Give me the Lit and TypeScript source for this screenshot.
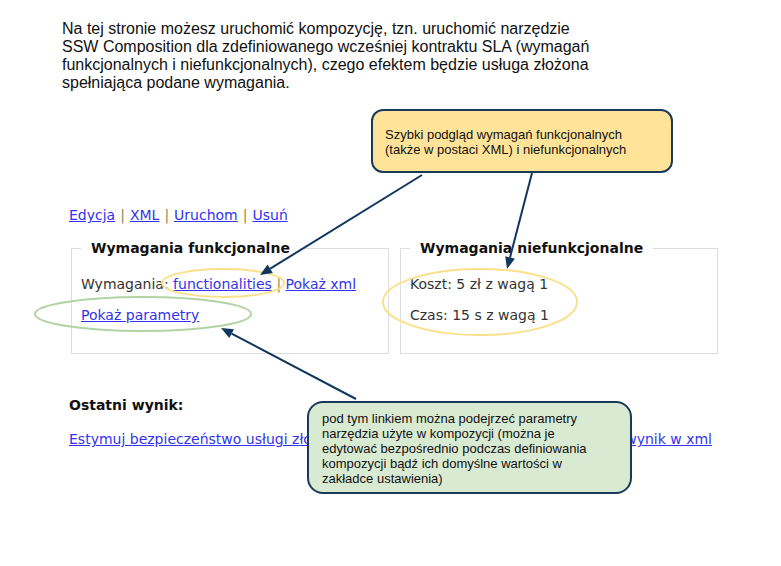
import { LitElement, html, css, svg } from "lit";
import { customElement } from "lit/decorators.js";

interface Arrow {
  from: [number, number];
  to: [number, number];
}

const ARROWS: Arrow[] = [
  { from: [422, 175], to: [260, 275] },
  { from: [532, 173], to: [507, 269] },
  { from: [356, 399], to: [221, 328] },
];

@customElement("app-root")
export class AppRoot extends LitElement {
  static styles = css`
    :host {
      display: block;
      background: #fff;
      color: #333;
      font: 14px/18px "DejaVu Sans", Verdana, sans-serif;
    }
    .page {
      position: relative;
      min-height: 100vh;
      box-sizing: border-box;
      padding: 20px 63px 48px 62px;
    }
    .intro {
      margin: 0 0 114px;
      color: #111;
      font: 16px/18px "Liberation Sans", Arial, sans-serif;
    }
    .panel {
      padding: 0 0 0 7px;
    }
    nav {
      display: flex;
      gap: 5px;
    }
    a {
      color: #33e;
      text-decoration: underline;
    }
    .sep {
      color: #885;
    }
    .groups {
      display: grid;
      grid-template-columns: 1fr 1fr;
      gap: 11px;
      margin: 15px 0 42px 2px;
    }
    fieldset {
      min-width: 0;
      height: 115px;
      box-sizing: border-box;
      margin: 0;
      padding: 8px 9px;
      border: 1px solid #ddd;
    }
    legend {
      padding: 0 10px;
      color: #111;
      font-weight: bold;
    }
    .row {
      margin: 10px 0 13px;
    }
    h2 {
      margin: 0 0 16px;
      color: #111;
      font-size: 14px;
      line-height: 18px;
    }
    .results {
      display: flex;
      justify-content: space-between;
      padding-right: 6px;
      white-space: nowrap;
    }
    .marks {
      position: absolute;
      top: 0;
      left: 0;
      overflow: visible;
      pointer-events: none;
    }
    .line {
      stroke: #12375f;
      stroke-width: 2;
    }
    .head {
      fill: #12375f;
    }
    .ring {
      fill: none;
      stroke: #fbe08c;
      stroke-width: 2;
    }
    .ring-green {
      stroke: #b3d3a6;
    }
    .note {
      position: absolute;
      box-sizing: border-box;
      margin: 0;
      border: 2px solid #1a3a5a;
      color: #111;
      font: 13px/15px "Liberation Sans", Arial, sans-serif;
      white-space: nowrap;
    }
    .note-yellow {
      top: 109px;
      left: 371px;
      width: 302px;
      padding: 16px 12px 14px;
      border-radius: 12px;
      background: #ffe399;
    }
    .note-green {
      top: 401px;
      left: 307px;
      width: 325px;
      padding: 8px 13px 6px;
      border-radius: 16px;
      background: #d9ead3;
    }
  `;

  private arrow({ from, to }: Arrow) {
    const angle = Math.atan2(to[1] - from[1], to[0] - from[0]);
    const baseX = to[0] - 12 * Math.cos(angle);
    const baseY = to[1] - 12 * Math.sin(angle);
    const dx = 5 * Math.sin(angle);
    const dy = 5 * Math.cos(angle);
    return svg`
      <line class="line" x1=${from[0]} y1=${from[1]} x2=${baseX} y2=${baseY}></line>
      <polygon class="head"
        points="${to[0]},${to[1]} ${baseX + dx},${baseY - dy} ${baseX - dx},${baseY + dy}"></polygon>`;
  }

  render() {
    return html`
      <main class="page">
        <p class="intro">
          Na tej stronie możesz uruchomić kompozycję, tzn. uruchomić narzędzie<br />
          SSW Composition dla zdefiniowanego wcześniej kontraktu SLA (wymagań<br />
          funkcjonalnych i niefunkcjonalnych), czego efektem będzie usługa złożona<br />
          spełniająca podane wymagania.
        </p>

        <section class="panel">
          <nav>
            <a href="#edycja">Edycja</a> <span class="sep">|</span>
            <a href="#xml">XML</a> <span class="sep">|</span>
            <a href="#uruchom">Uruchom</a> <span class="sep">|</span>
            <a href="#usun">Usuń</a>
          </nav>
          <div class="groups">
            <fieldset>
              <legend>Wymagania funkcjonalne</legend>
              <div class="row">
                Wymagania: <a href="#functionalities">functionalities</a>
                <span class="sep">|</span> <a href="#pokaz-xml">Pokaż xml</a>
              </div>
              <div class="row"><a href="#parametry">Pokaż parametry</a></div>
            </fieldset>
            <fieldset>
              <legend>Wymagania niefunkcjonalne</legend>
              <div class="row">Koszt: 5 zł z wagą 1</div>
              <div class="row">Czas: 15 s z wagą 1</div>
            </fieldset>
          </div>
          <h2>Ostatni wynik:</h2>
          <div class="results">
            <a href="#estymuj">Estymuj bezpieczeństwo usługi złożonej</a>
            <a href="#wynik">Pokaż wynik w xml</a>
          </div>
        </section>

        <svg class="marks" width="781" height="566" aria-hidden="true">
          <ellipse class="ring" cx="223" cy="283" rx="61" ry="14"></ellipse>
          <ellipse class="ring" cx="480" cy="302" rx="97" ry="33"></ellipse>
          <ellipse class="ring ring-green" cx="143" cy="314" rx="108" ry="17"></ellipse>
          ${ARROWS.map((a) => this.arrow(a))}
        </svg>
        <p class="note note-yellow">
          Szybki podgląd wymagań funkcjonalnych<br />
          (także w postaci XML) i niefunkcjonalnych
        </p>
        <p class="note note-green">
          pod tym linkiem można podejrzeć parametry<br />
          narzędzia użyte w kompozycji (można je<br />
          edytować bezpośrednio podczas definiowania<br />
          kompozycji bądź ich domyślne wartości w<br />
          zakładce ustawienia)
        </p>
      </main>
    `;
  }
}
